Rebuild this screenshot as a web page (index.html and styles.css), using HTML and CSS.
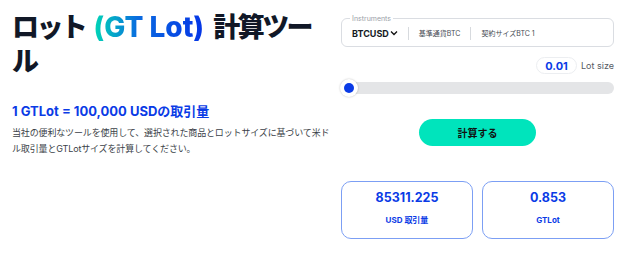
FILE: index.html
```html
<!DOCTYPE html>
<html lang="ja">
<head>
<meta charset="utf-8">
<link rel="stylesheet" href="styles.css">
</head>
<body>
<div class="page">
  <section class="intro">
    <h1 class="title">ロット <span class="grad">(GT Lot)</span> 計算ツール</h1>
    <h2 class="sub">1 GTLot = 100,000 USDの取引量</h2>
    <p class="desc">当社の便利なツールを使用して、選択された商品とロットサイズに基づいて米ドル取引量とGTLotサイズを計算してください。</p>
  </section>
  <section class="calc">
    <fieldset class="instr">
      <legend>Instruments</legend>
      <div class="instr-row">
        <span class="sym">BTCUSD<svg class="chev" width="8" height="6" viewBox="0 0 8 6"><path d="M1 1.5 L4 4.5 L7 1.5" fill="none" stroke="#111" stroke-width="1.3"/></svg></span>
        <span class="sep"></span>
        <span class="meta">基準通貨BTC</span>
        <span class="sep"></span>
        <span class="meta">契約サイズBTC 1</span>
      </div>
    </fieldset>
    <div class="lot-row">
      <span class="lot-input">0.01</span>
      <span class="lot-label">Lot size</span>
    </div>
    <div class="slider">
      <span class="thumb"></span>
    </div>
    <div class="btn-row">
      <button class="btn">計算する</button>
    </div>
    <div class="results">
      <div class="card">
        <div class="val">85311.225</div>
        <div class="lbl">USD 取引量</div>
      </div>
      <div class="card">
        <div class="val">0.853</div>
        <div class="lbl">GTLot</div>
      </div>
    </div>
  </section>
</div>
</body>
</html>
```

FILE: styles.css
```css
* { box-sizing: border-box; }
html, body { margin: 0; padding: 0; background: #fff; }
body {
  font-family: "Inter", "Noto Sans CJK JP", sans-serif;
  color: #121826;
}
.page {
  display: grid;
  grid-template-columns: 318px 273px;
  column-gap: 11px;
  padding: 10px 10px 0 12px;
}
.title {
  margin: 0;
  max-width: 314px;
  font-size: 27px;
  line-height: 34px;
  font-weight: 800;
  letter-spacing: -2.6px;
  color: #111827;
}
.grad {
  font-size: 28px;
  letter-spacing: 0;
  margin: 0 6px 0 5px;
  background: linear-gradient(90deg, #00d6b6 0%, #0a6be0 40%, #0535e6 100%);
  -webkit-background-clip: text;
  background-clip: text;
  color: transparent;
}
.sub {
  margin: 23px 0 0;
  font-size: 13px;
  line-height: 18px;
  font-weight: 700;
  color: #0a3be6;
}
.desc {
  margin: 5px 0 0;
  font-size: 9px;
  line-height: 16px;
  letter-spacing: -0.15px;
  color: #3b3f48;
}
.calc { display: flex; flex-direction: column; }
.instr {
  margin: 5px 0 0;
  padding: 0 10px 6px;
  border: 1px solid #dadde2;
  border-radius: 6px;
  height: 32px;
}
.instr legend {
  font-size: 7px;
  color: #9aa0a8;
  padding: 0 2px;
  margin-left: -2px;
  line-height: 7px;
}
.instr-row {
  display: flex;
  align-items: center;
  height: 18px;
  margin-top: 2px;
}
.sym {
  font-size: 9px;
  font-weight: 700;
  color: #151a24;
  display: flex;
  align-items: center;
  gap: 1px;
}
.sep {
  width: 1px;
  height: 13px;
  background: #d7dade;
  margin: 0 10px;
}
.meta { font-size: 7px; color: #454a52; }
.lot-row {
  display: flex;
  justify-content: flex-end;
  align-items: center;
  margin-top: 10px;
  gap: 4px;
}
.lot-input {
  width: 41px;
  height: 17px;
  border: 1px solid #eceef1;
  border-radius: 9px;
  font-size: 11px;
  font-weight: 700;
  color: #0a3be6;
  display: flex;
  align-items: center;
  justify-content: center;
}
.lot-label { font-size: 9px; color: #555a62; }
.slider {
  position: relative;
  margin-top: 8px;
  height: 12px;
  border-radius: 6px;
  background: #e4e5e7;
}
.thumb {
  position: absolute;
  left: -1px;
  top: -3px;
  width: 18px;
  height: 18px;
  border-radius: 50%;
  background: #fff;
  box-shadow: 0 0 2px rgba(0,0,0,0.25);
}
.thumb::after {
  content: "";
  position: absolute;
  left: 4px;
  top: 4px;
  width: 10px;
  height: 10px;
  border-radius: 50%;
  background: #0a3be6;
}
.btn-row { display: flex; justify-content: center; margin-top: 25px; }
.btn {
  width: 117px;
  height: 27px;
  border: none;
  border-radius: 14px;
  background: #00e4bc;
  font-family: inherit;
  font-size: 10px;
  font-weight: 700;
  color: #111;
  padding: 0;
}
.results {
  display: grid;
  grid-template-columns: 1fr 1fr;
  gap: 9px;
  margin-top: 35px;
}
.card {
  height: 58px;
  border: 1.5px solid #7c9ff4;
  border-radius: 10px;
  display: flex;
  flex-direction: column;
  align-items: center;
  padding-top: 8px;
}
.val {
  font-size: 12.5px;
  font-weight: 700;
  color: #0a3be6;
  line-height: 16px;
}
.lbl {
  margin-top: 9px;
  font-size: 8px;
  font-weight: 700;
  color: #0a3be6;
  line-height: 10px;
}
```
